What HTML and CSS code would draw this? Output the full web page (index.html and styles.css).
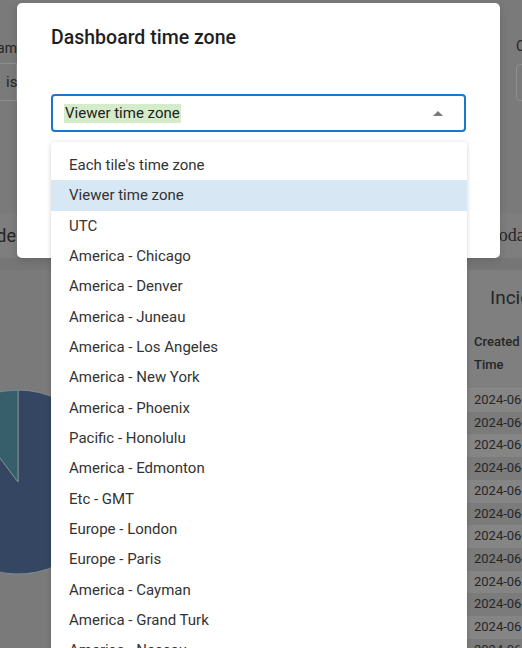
FILE: index.html
```html
<!DOCTYPE html>
<html>
<head>
<meta charset="utf-8">
<link rel="stylesheet" href="styles.css">
</head>
<body>
<div class="page">
  <div class="filters">
    <div class="filter filter-left">
      <div class="filter-inner">
        <div class="flabel">Team</div>
        <div class="fbox"><span class="fval">is any</span></div>
      </div>
    </div>
    <div class="filter filter-right">
      <div class="flabel">Created</div>
      <div class="fbox"></div>
    </div>
  </div>
  <div class="tabbar">
    <div class="tab-left"><span>Mode</span></div>
    <div class="tab-right">Today</div>
  </div>
  <div class="gap"></div>
  <div class="panels">
    <div class="panel panel-left">
      <svg class="pie" width="52" height="200" viewBox="0 380 52 200">
        <path d="M18 482 L18 390 A92 92 0 1 1 -37.2 408.4 Z" fill="#344661" stroke="#7d8a90" stroke-width="1"/>
        <path d="M18 482 L18 390 A92 92 0 0 0 -37.2 408.4 Z" fill="#365f6b" stroke="#7d8a90" stroke-width="1"/>
      </svg>
    </div>
    <div class="panel panel-right">
      <h2 class="ptitle">Incidents</h2>
      <table class="tbl">
        <thead><tr><th>Created<br>Time</th></tr></thead>
        <tbody>
          <tr><td>2024-06-12</td></tr>
          <tr><td>2024-06-12</td></tr>
          <tr><td>2024-06-11</td></tr>
          <tr><td>2024-06-11</td></tr>
          <tr><td>2024-06-10</td></tr>
          <tr><td>2024-06-10</td></tr>
          <tr><td>2024-06-09</td></tr>
          <tr><td>2024-06-09</td></tr>
          <tr><td>2024-06-08</td></tr>
          <tr><td>2024-06-08</td></tr>
          <tr><td>2024-06-07</td></tr>
          <tr><td>2024-06-07</td></tr>
        </tbody>
      </table>
    </div>
  </div>
</div>

<div class="modal">
  <h1 class="mtitle">Dashboard time zone</h1>
  <div class="select">
    <span class="sval">Viewer time zone</span>
    <span class="caret"></span>
  </div>
</div>

<ul class="menu">
  <li>Each tile's time zone</li>
  <li class="active">Viewer time zone</li>
  <li>UTC</li>
  <li>America - Chicago</li>
  <li>America - Denver</li>
  <li>America - Juneau</li>
  <li>America - Los Angeles</li>
  <li>America - New York</li>
  <li>America - Phoenix</li>
  <li>Pacific - Honolulu</li>
  <li>America - Edmonton</li>
  <li>Etc - GMT</li>
  <li>Europe - London</li>
  <li>Europe - Paris</li>
  <li>America - Cayman</li>
  <li>America - Grand Turk</li>
  <li>America - Nassau</li>
</ul>
</body>
</html>
```

FILE: styles.css
```css
* { box-sizing: border-box; }
html, body {
  margin: 0;
  padding: 0;
}
body {
  width: 522px;
  height: 648px;
  overflow: hidden;
  position: relative;
  background: #7a7a7a;
  font-family: Roboto, "Liberation Sans", sans-serif;
  color: #2a2a2a;
}
.page {
  width: 522px;
}
.filters {
  height: 213px;
  display: flex;
  justify-content: space-between;
}
.filter-left {
  width: 17px;
  overflow: hidden;
  display: flex;
  justify-content: flex-end;
}
.filter-inner {
  flex: none;
  width: 40px;
}
.flabel {
  padding-top: 38px;
  height: 63px;
  font-size: 14px;
  line-height: 20px;
  color: #262626;
}
.filter-left .flabel {
  text-align: right;
  white-space: nowrap;
  direction: rtl;
}
.fbox {
  height: 38px;
  border: 1px solid #8e8e8e;
  border-radius: 4px;
  font-size: 15px;
  line-height: 36px;
  white-space: nowrap;
  color: #262626;
}
.filter-left .fbox {
  padding-left: 29px;
  border-left: none;
  border-radius: 0;
}
.filter-right {
  width: 6px;
  overflow: visible;
}
.filter-right .flabel {
  padding-top: 36px;
  height: 64px;
}
.filter-right .fbox {
  width: 40px;
  height: 37px;
}
.tabbar {
  height: 45px;
  background: #7e7e7e;
  display: flex;
  justify-content: space-between;
  align-items: center;
  overflow: hidden;
}
.tab-left {
  width: 16px;
  overflow: hidden;
  display: flex;
  justify-content: flex-end;
  font-size: 18px;
  white-space: nowrap;
  color: #262626;
}
.tab-left span { flex: none; }
.tab-right {
  font-family: "Liberation Serif", serif;
  font-size: 18px;
  white-space: nowrap;
  width: 33px;
  color: #262626;
}
.gap {
  height: 12px;
  background: #767676;
}
.panels {
  display: flex;
  gap: 7px;
}
.panel-left {
  width: 460px;
  height: 380px;
  padding-top: 110px;
}
.pie {
  display: block;
}
.panel-right {
  flex: 1;
  background: #7f7f7f;
  padding-top: 16px;
  overflow: hidden;
}
.ptitle {
  margin: 0 0 14px 23px;
  font-size: 19px;
  line-height: 24px;
  font-weight: 400;
  white-space: nowrap;
  color: #262626;
}
.tbl {
  border-collapse: collapse;
  font-size: 13px;
  white-space: nowrap;
}
.tbl th {
  text-align: left;
  font-weight: 500;
  padding: 6px 7px 12px;
  line-height: 23px;
  border-bottom: 1px solid #8a8a8a;
  color: #262626;
}
.tbl td {
  height: 22.7px;
  padding: 0 7px;
  line-height: 22.7px;
  color: #262626;
}
.tbl tbody tr:nth-child(odd) td { background: #858585; }
.tbl tbody tr:nth-child(even) td { background: #7b7b7b; }

.modal {
  position: absolute;
  left: 17px;
  top: 3px;
  width: 483px;
  height: 255px;
  background: #fff;
  border-radius: 5px;
  padding: 23px 34px 0;
  box-shadow: 0 2px 8px rgba(0,0,0,0.15);
}
.mtitle {
  margin: 0;
  font-size: 19.5px;
  line-height: 24px;
  font-weight: 500;
  color: #1f1f1f;
}
.select {
  margin-top: 44px;
  height: 38px;
  width: 415px;
  border: 2px solid #1d77c9;
  border-radius: 4px;
  display: flex;
  align-items: center;
  justify-content: space-between;
  padding: 0 21px 0 11px;
}
.sval {
  font-size: 15px;
  line-height: 19px;
  background: #d4ecc9;
  padding: 0 1px;
  color: #222;
}
.caret {
  width: 0;
  height: 0;
  border-left: 5.5px solid transparent;
  border-right: 5.5px solid transparent;
  border-bottom: 5.5px solid #7a7a7a;
}
.menu {
  position: absolute;
  left: 51px;
  top: 142px;
  width: 416px;
  margin: 0;
  padding: 8px 0 0;
  list-style: none;
  background: #fff;
  border-radius: 4px;
  box-shadow: 0 1px 5px rgba(0,0,0,0.18);
}
.menu li {
  height: 30.33px;
  line-height: 30.33px;
  padding-left: 18px;
  font-size: 15px;
  color: #333;
  white-space: nowrap;
}
.menu li.active {
  background: #d7e8f4;
}
```
